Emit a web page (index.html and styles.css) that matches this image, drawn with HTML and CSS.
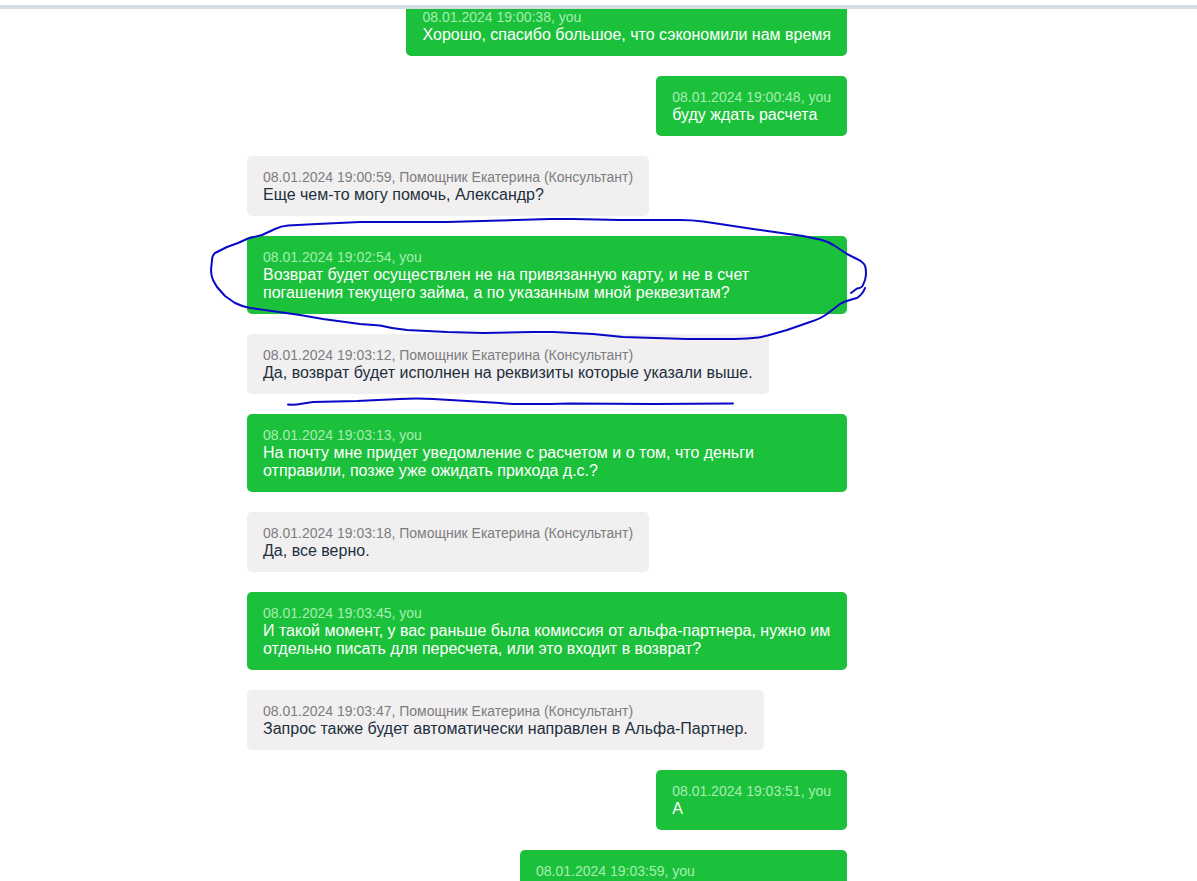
FILE: index.html
```html
<!DOCTYPE html>
<html lang="ru">
<head>
<meta charset="utf-8">
<meta name="viewport" content="width=device-width, initial-scale=1">
<title>Чат</title>
<link rel="stylesheet" href="styles.css">
</head>
<body class="page">
<header class="topbar"></header>
<main class="chat">
  <div class="feed">
    <article class="message message--own">
      <div class="meta">08.01.2024 19:00:38, you</div>
      <p class="text">Хорошо, спасибо большое, что сэкономили нам время</p>
    </article>
    <article class="message message--own">
      <div class="meta">08.01.2024 19:00:48, you</div>
      <p class="text">буду ждать расчета</p>
    </article>
    <article class="message">
      <div class="meta">08.01.2024 19:00:59, Помощник Екатерина (Консультант)</div>
      <p class="text">Еще чем-то могу помочь, Александр?</p>
    </article>
    <article class="message message--own">
      <div class="meta">08.01.2024 19:02:54, you</div>
      <p class="text">Возврат будет осуществлен не на привязанную карту, и не в счет погашения текущего займа, а по указанным мной реквезитам?</p>
    </article>
    <article class="message">
      <div class="meta">08.01.2024 19:03:12, Помощник Екатерина (Консультант)</div>
      <p class="text">Да, возврат будет исполнен на реквизиты которые указали выше.</p>
    </article>
    <article class="message message--own">
      <div class="meta">08.01.2024 19:03:13, you</div>
      <p class="text">На почту мне придет уведомление с расчетом и о том, что деньги отправили, позже уже ожидать прихода д.с.?</p>
    </article>
    <article class="message">
      <div class="meta">08.01.2024 19:03:18, Помощник Екатерина (Консультант)</div>
      <p class="text">Да, все верно.</p>
    </article>
    <article class="message message--own">
      <div class="meta">08.01.2024 19:03:45, you</div>
      <p class="text">И такой момент, у вас раньше была комиссия от альфа-партнера, нужно им отдельно писать для пересчета, или это входит в возврат?</p>
    </article>
    <article class="message">
      <div class="meta">08.01.2024 19:03:47, Помощник Екатерина (Консультант)</div>
      <p class="text">Запрос также будет автоматически направлен в Альфа-Партнер.</p>
    </article>
    <article class="message message--own">
      <div class="meta">08.01.2024 19:03:51, you</div>
      <p class="text">А</p>
    </article>
    <article class="message message--own message--cut">
      <div class="meta">08.01.2024 19:03:59, you</div>
      <p class="text"></p>
    </article>
    <svg class="ink" width="600" height="420" aria-hidden="true">
      <g transform="translate(-247 4)">
        <path d="M851 293L857 288.500Q862 288 863 285L865 280Q866 276 866 273Q866 267 864 264Q862 261 857 259L847 254L835 246Q829 242 822 240L803 236L753 229L720 224L703 221.500Q692 220 680 220L620 220L573 219L550 219L500 220.500L447 222L360 222L317 224L288 225.500Q281 226 275 229L262 235L248 238.500L238 243L227 247L215 253Q212 256 212 260L211 270Q211 275 213 280L217 287L225 296L235 303Q241 306 250 308L300 315L323 319L360 324L380 325.500Q394 329 407 330L447 332L483 333L533 332L553 332L593 334L623 337L687 339L727 339Q742 339 753 338Q764 337 773 334L787 330L810 322Q820 319 827 314L840 304Q845 301 857 298Q863 294 865 288"/>
        <path d="M288 404.500Q296 405 300 404L313 402L357 401L400 399Q416 398 433 399L467 401L500 403Q510 404 520 404L550 404L570 403.500L653 404L733 403.500"/>
      </g>
    </svg>
  </div>
</main>
</body>
</html>
```
FILE: styles.css
```css
* {
  box-sizing: border-box;
}

.page {
  margin: 0;
  height: 100vh;
  display: flex;
  flex-direction: column;
  overflow: hidden;
  background: #fff;
  font-family: "Liberation Sans", Arial, sans-serif;
  font-size: 16px;
  line-height: 18px;
  color: #212f3d;
}

.topbar {
  flex: none;
  height: 9px;
  border-bottom: 4px solid #d5dbe0;
}

.chat {
  flex: 1;
  min-height: 0;
  overflow: hidden;
  padding-right: 103px;
}

/* The feed is scrolled a little past its first message. */
.feed {
  position: relative;
  max-width: 600px;
  margin: -13px auto 0;
  display: flex;
  flex-direction: column;
  align-items: flex-start;
  gap: 20px;
}

.message {
  max-width: 100%;
  padding: 12px 16px;
  border-radius: 5px;
  background: #f1eff0;
}

.message--own {
  align-self: flex-end;
  background: #1bc13a;
  color: #fff;
}

.message--cut {
  min-width: 327px;
}

.meta {
  font-size: 14px;
  color: #7b7d80;
}

.message--own .meta {
  color: #a8eeb4;
}

.text {
  margin: 0;
  min-height: 18px;
}

.ink {
  position: absolute;
  top: 0;
  left: 0;
  overflow: visible;
  pointer-events: none;
  fill: none;
  stroke: #0a08c8;
  stroke-width: 2;
  stroke-linecap: round;
  stroke-linejoin: round;
}
```
